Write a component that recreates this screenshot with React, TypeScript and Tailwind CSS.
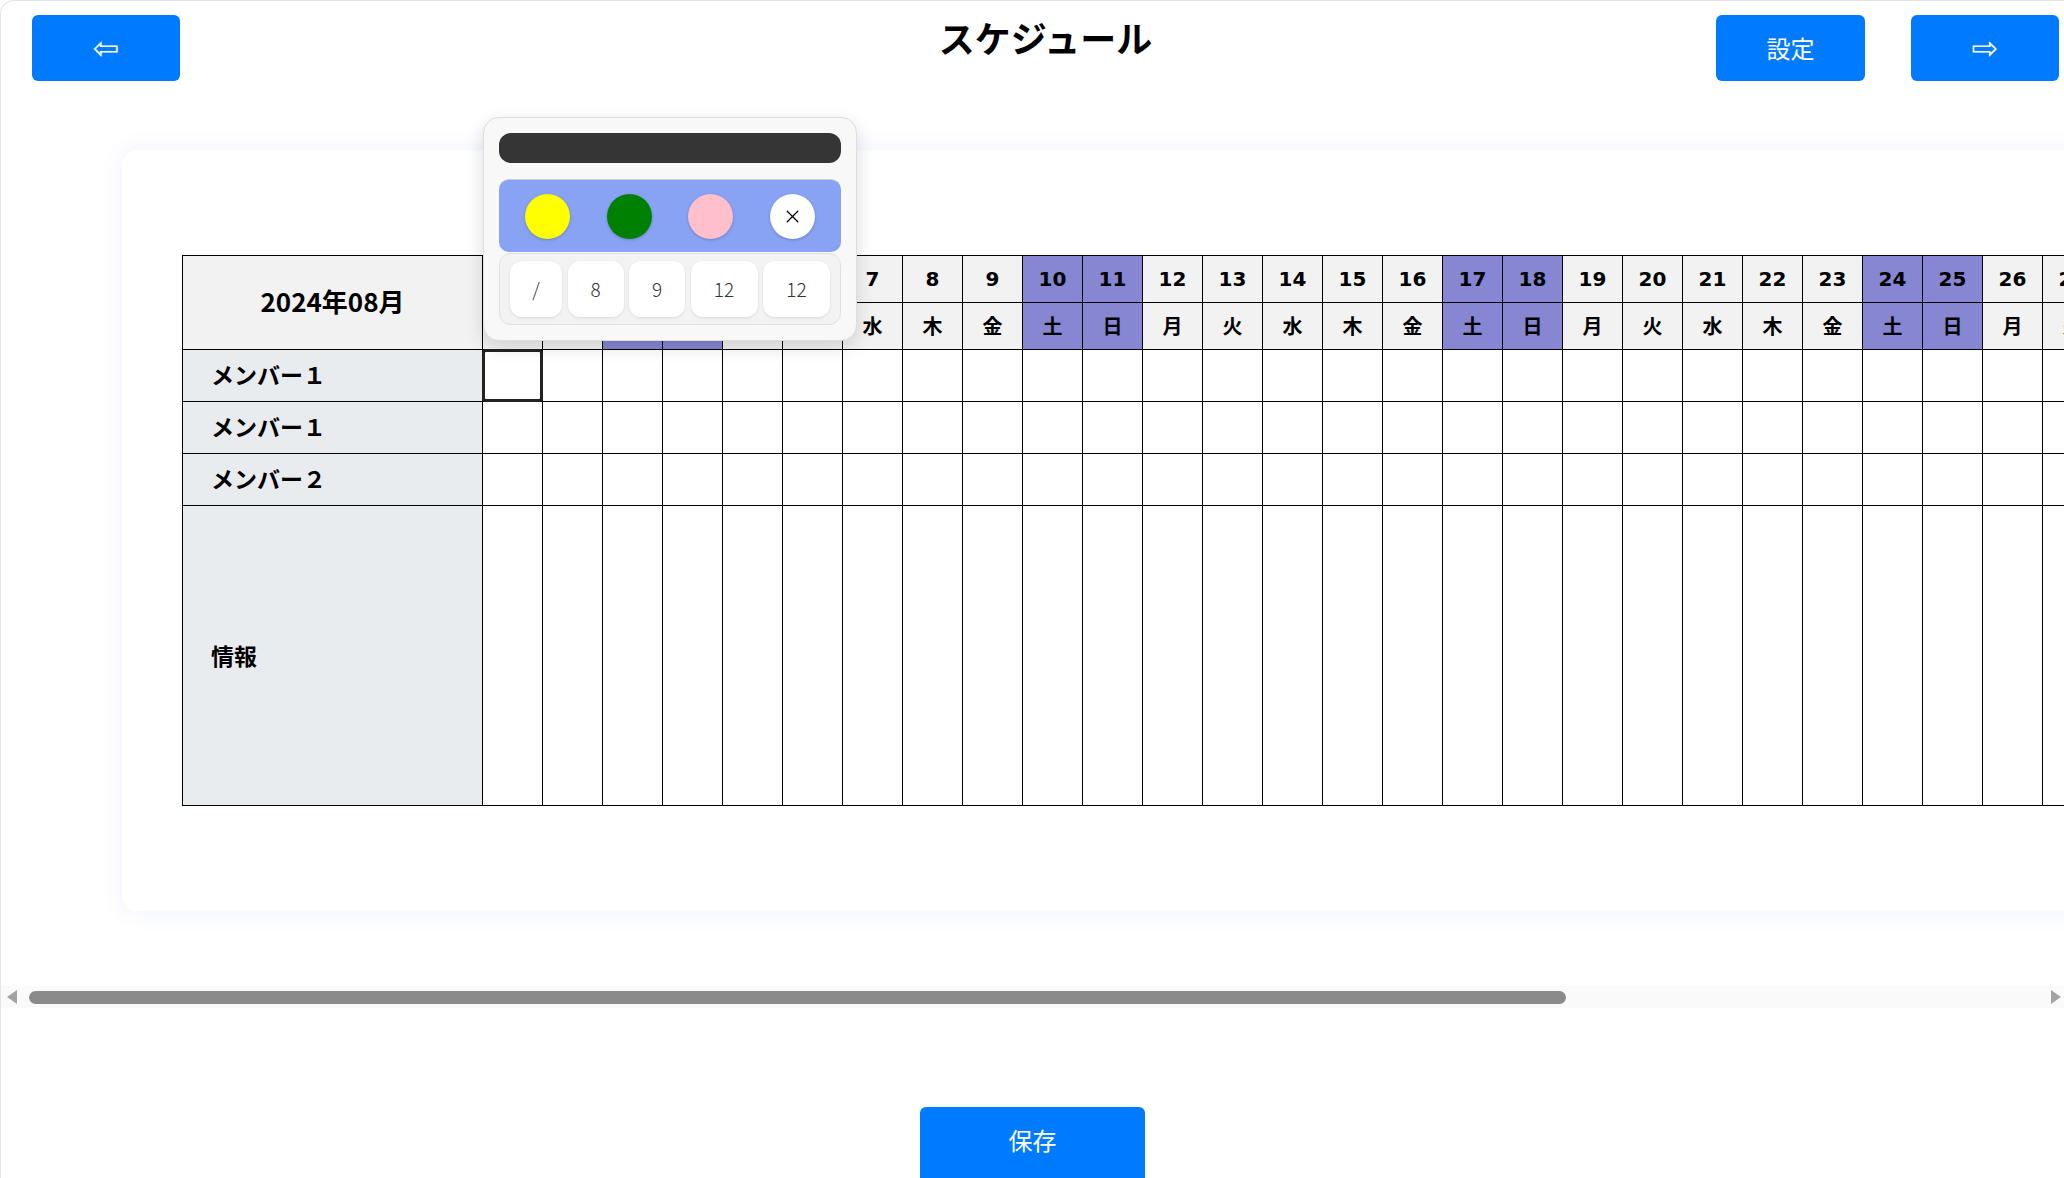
import { X } from "lucide-react";

const DAYS = Array.from({ length: 31 }, (_, i) => i + 1);
const WEEK = ["日", "月", "火", "水", "木", "金", "土"];
const MEMBERS = ["メンバー１", "メンバー１", "メンバー２"];

const weekday = (d: number) => WEEK[(d + 3) % 7];
const isWeekend = (d: number) => {
  const w = (d + 3) % 7;
  return w === 0 || w === 6;
};

const CHIPS = [
  { label: "/", w: "w-[52px]" },
  { label: "8", w: "w-[56px]" },
  { label: "9", w: "w-[56px]" },
  { label: "12", w: "w-[67px]" },
  { label: "12", w: "w-[67px]" },
];

function Picker() {
  return (
    <div className="absolute left-[301px] top-[-138px] z-10 w-[374px] rounded-[16px] border border-[#dedede] bg-[#f8f8f8] p-[15px] shadow-[0_6px_18px_rgba(0,0,0,0.14)]">
      <div className="h-[30px] rounded-[12px] bg-[#353535]" />
      <div className="mt-[16px] flex h-[73px] items-center justify-between rounded-[10px] border-t border-[#c9cfe0] bg-[#88a2f4] px-[26px]">
        <span className="h-[45px] w-[45px] rounded-full bg-[yellow] shadow-[0_1px_3px_rgba(0,0,0,0.2)]" />
        <span className="h-[45px] w-[45px] rounded-full bg-[green] shadow-[0_1px_3px_rgba(0,0,0,0.2)]" />
        <span className="h-[45px] w-[45px] rounded-full bg-[pink] shadow-[0_1px_3px_rgba(0,0,0,0.2)]" />
        <span className="flex h-[45px] w-[45px] items-center justify-center rounded-full bg-white shadow-[0_1px_3px_rgba(0,0,0,0.2)]">
          <X size={21} strokeWidth={1.5} className="text-black" />
        </span>
      </div>
      <div className="mt-[1px] flex gap-[5.5px] rounded-[12px] border border-[#e0e0e0] bg-[#f3f3f3] px-[10px] py-[7px]">
        {CHIPS.map((c, i) => (
          <button
            key={i}
            className={`${c.w} flex h-[56px] items-center justify-center rounded-[12px] bg-white text-[19px] font-light text-[#333] shadow-[0_1px_3px_rgba(0,0,0,0.1)]`}
          >
            {c.label}
          </button>
        ))}
      </div>
    </div>
  );
}

function ScheduleTable() {
  return (
    <div className="relative">
      <Picker />
      <table className="w-[2160px] table-fixed border-collapse">
        <colgroup>
          <col className="w-[300px]" />
          {DAYS.map((d) => (
            <col key={d} className="w-[60px]" />
          ))}
        </colgroup>
        <thead>
          <tr className="h-[47px]">
            <th
              rowSpan={2}
              className="border border-black bg-[#f2f2f2] pb-[4px] text-[26px] font-bold"
            >
              2024年08月
            </th>
            {DAYS.map((d) => (
              <th
                key={d}
                className={`border border-black font-['DejaVu_Sans','Noto_Sans_CJK_JP',sans-serif] text-[20px] font-bold ${
                  isWeekend(d) ? "bg-[#8686d2]" : "bg-[#f2f2f2]"
                }`}
              >
                {d}
              </th>
            ))}
          </tr>
          <tr className="h-[47px]">
            {DAYS.map((d) => (
              <th
                key={d}
                className={`border border-black text-[20px] font-bold ${
                  isWeekend(d) ? "bg-[#8686d2]" : "bg-[#f2f2f2]"
                }`}
              >
                {weekday(d)}
              </th>
            ))}
          </tr>
        </thead>
        <tbody>
          {MEMBERS.map((m, r) => (
            <tr key={r} className="h-[52px]">
              <td className="border border-black bg-[#e9ecef] pb-[2px] pl-[28px] text-left text-[23px] font-bold">
                {m}
              </td>
              {DAYS.map((d) => (
                <td key={d} className="relative border border-black bg-white">
                  {r === 0 && d === 1 && (
                    <div className="absolute inset-[-1px] rounded-[4px] border-[3px] border-[#222]" />
                  )}
                </td>
              ))}
            </tr>
          ))}
          <tr className="h-[300px]">
            <td className="border border-black bg-[#e9ecef] pl-[28px] text-left text-[23px] font-bold">
              情報
            </td>
            {DAYS.map((d) => (
              <td key={d} className="border border-black bg-white" />
            ))}
          </tr>
        </tbody>
      </table>
    </div>
  );
}

export default function App() {
  return (
    <div className="h-[1178px] w-[2064px] overflow-hidden bg-white font-['Noto_Sans_CJK_JP',sans-serif] text-black">
      <div className="h-full rounded-tl-[14px] border-l border-t border-[#e4e4e4]">
        {/* header */}
        <header className="grid grid-cols-[1fr_auto_1fr] items-start pl-[31px] pr-[5px] pt-[14px]">
          <button className="flex h-[66px] w-[148px] items-center justify-center rounded-md bg-[#007bff] font-['DejaVu_Sans',sans-serif] text-[32px] leading-none text-white">
            ⇦
          </button>
          <h1 className="mt-[4px] text-[36px] font-bold leading-none">スケジュール</h1>
          <div className="flex justify-end gap-[46px]">
            <button className="flex h-[66px] w-[149px] items-center justify-center rounded-md bg-[#007bff] text-[24px] text-white">
              設定
            </button>
            <button className="flex h-[66px] w-[148px] items-center justify-center rounded-md bg-[#007bff] font-['DejaVu_Sans',sans-serif] text-[32px] leading-none text-white">
              ⇨
            </button>
          </div>
        </header>

        {/* scroll area */}
        <div className="overflow-hidden pb-[75px] pl-[121px] pt-[69px]">
          <div className="w-max rounded-[16px] bg-white px-[60px] py-[105px] shadow-[0_0_24px_rgba(70,90,255,0.09)]">
            <ScheduleTable />
          </div>
        </div>

        {/* scrollbar */}
        <div className="flex h-[22px] items-center bg-[#fafafa]">
          <svg width="11" height="14" viewBox="0 0 11 14" className="ml-[6px]">
            <polygon points="10,0 10,14 0,7" fill="#a3a3a3" />
          </svg>
          <div className="ml-[11px] h-[13px] w-[1537px] rounded-full bg-[#8a8a8a]" />
          <div className="flex-1" />
          <svg width="11" height="14" viewBox="0 0 11 14" className="mr-[3px]">
            <polygon points="1,0 1,14 11,7" fill="#a3a3a3" />
          </svg>
        </div>

        {/* footer */}
        <div className="mt-[99px] flex justify-center">
          <button className="flex h-[76px] w-[225px] items-start justify-center rounded-md bg-[#007bff] pt-[15px] text-[24px] text-white">
            保存
          </button>
        </div>
      </div>
    </div>
  );
}
